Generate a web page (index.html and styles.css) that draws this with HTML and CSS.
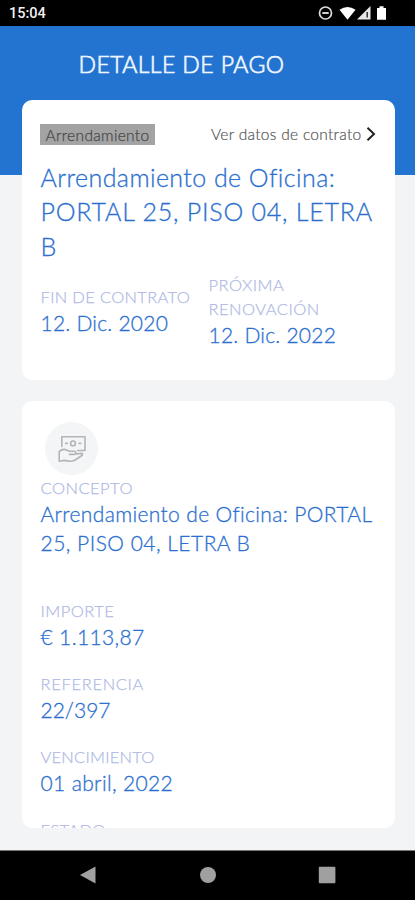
FILE: index.html
```html
<!DOCTYPE html>
<html lang="es">
<head>
<meta charset="utf-8">
<title>Detalle de pago</title>
<link rel="stylesheet" href="styles.css">
</head>
<body>
<div class="phone">
  <div class="status">
    <span class="clock">15:04</span>
    <svg class="status-icons" width="72" height="18" viewBox="0 0 72 18">
      <circle cx="7.5" cy="8" r="6" fill="none" stroke="#ddd" stroke-width="1.7"/>
      <path d="M4.3 8h6.4" stroke="#ddd" stroke-width="1.9"/>
      <path d="M21.5 4.8Q29.5-1 37.5 4.8L29.5 14.8Z" fill="#fff"/>
      <path d="M52.5 1V14.5H39Z" fill="#e8e8e8"/>
      <path d="M49.2 7v5.5" stroke="#333" stroke-width="1.5"/>
      <path d="M59 3h2.5V1.2h4V3H68v11.7h-9Z" fill="#fff"/>
    </svg>
  </div>
  <header class="header"><h1>DETALLE DE PAGO</h1></header>
  <main class="content">
    <section class="card contract">
      <div class="top-row">
        <span class="badge">Arrendamiento</span>
        <a class="link">Ver datos de contrato<svg width="10" height="16" viewBox="0 0 10 16"><path d="M1.5 1.8L8 8L1.5 14.2" fill="none" stroke="#222" stroke-width="2"/></svg></a>
      </div>
      <h2><span class="h-a">Arrendamiento de Oficina:</span><br><span class="h-b">PORTAL 25, PISO 04, LETRA</span><br>B</h2>
      <div class="dates">
        <div><div class="label">FIN DE CONTRATO</div><div class="value t2">12. Dic. 2020</div></div>
        <div><div class="label t5">PRÓXIMA<br>RENOVACIÓN</div><div class="value t2">12. Dic. 2022</div></div>
      </div>
    </section>
    <section class="card payment">
      <div class="avatar">
        <svg width="30" height="30" viewBox="0 0 30 30" fill="none" stroke="#b3b5b7" stroke-width="1.6" stroke-linejoin="round" stroke-linecap="round">
          <path d="M4.8 12.5V2.7H28V16.5H20.5"/>
          <circle cx="16" cy="9.4" r="2.4"/>
          <path d="M8.6 9.4h1.6M22.2 9.4h1.6"/>
          <path d="M2.2 17.6C5 14.9 9 15.2 12 17.2H17C19.4 17.2 19.6 20.4 17 20.4H12.5M19 20L24.4 19.4C26 19.6 25.8 21.2 24.6 21.8L17.6 26.2C15.4 27.6 9.8 27 7.2 26.4L2.2 27.2V17.6"/>
        </svg>
      </div>
      <div class="field concept"><div class="label t5">CONCEPTO</div><div class="value"><span>Arrendamiento de Oficina: PORTAL</span><br><span class="t5">25, PISO 04, LETRA B</span></div></div>
      <div class="field"><div class="label t5">IMPORTE</div><div class="value">€ 1.113,87</div></div>
      <div class="field"><div class="label t7">REFERENCIA</div><div class="value t0">22/397</div></div>
      <div class="field"><div class="label t2">VENCIMIENTO</div><div class="value">01 abril, 2022</div></div>
      <div class="field"><div class="label">ESTADO</div></div>
    </section>
  </main>
  <nav class="navbar">
    <svg width="20" height="20" viewBox="0 0 20 20"><path d="M2 10L17.5 1.5V18.5Z"/></svg>
    <svg width="20" height="20" viewBox="0 0 20 20"><circle cx="10" cy="10" r="8"/></svg>
    <svg width="20" height="20" viewBox="0 0 20 20"><rect x="1.8" y="1.8" width="16.6" height="16.4" rx="1"/></svg>
  </nav>
</div>
</body>
</html>
```
FILE: styles.css
```css
* { box-sizing: border-box; }
body { margin: 0; font-family: Lato, "Open Sans", sans-serif; font-weight: 300; }
h1, h2 { margin: 0; font-weight: 300; }
svg { display: block; }
.phone { width: 415px; height: 900px; display: flex; flex-direction: column; overflow: hidden; background: #f3f4f6; }
.status { height: 25.5px; flex: none; background: #000; display: flex; justify-content: space-between; padding: 5px 23px 0 9px; }
.clock { font: 500 14.5px/18px Roboto, sans-serif; color: #f2f2f2; }
.status-icons { margin-right: 2px; }
.header { height: 149px; flex: none; background: #2374d1; padding: 23px 0 0 78.5px; }
.header h1 { font-size: 23px; line-height: 30px; letter-spacing: .42px; color: #eff5ff; -webkit-text-stroke: .7px #eff5ff; }
.content { flex: 1; min-height: 0; margin-top: -75px; padding: 0 20.5px 21.5px 21.5px; display: flex; flex-direction: column; gap: 21.5px; }
.card { background: #fff; border-radius: 10px; padding-left: 19px; padding-right: 18px; overflow: hidden; }
.contract { height: 280.2px; flex: none; padding-top: 24px; }
.payment { flex: 1; min-height: 0; padding-top: 21px; }
.top-row { display: flex; justify-content: space-between; align-items: center; height: 21.5px; }
.badge { width: 115px; height: 21.5px; margin-left: -.5px; padding-left: 5.5px; background: #a3a3a3; color: #484848; font-size: 15.5px; line-height: 22px; letter-spacing: .33px; -webkit-text-stroke: .25px #484848; }
.link { display: flex; align-items: center; gap: 4px; color: #555; font-size: 15.5px; line-height: 22px; letter-spacing: .3px; margin-right: 1px; -webkit-text-stroke: .2px #555; white-space: nowrap; }
h2 { margin-top: 14.8px; color: #2c70cf; font-size: 25px; line-height: 34.5px; white-space: nowrap; -webkit-text-stroke: .3px #2c70cf; }
.h-a { letter-spacing: .42px; }
.h-b { letter-spacing: .77px; }
.dates { display: grid; grid-template-columns: 168px 1fr; align-items: center; margin-top: 11.1px; }
.label { color: #b0bae5; font-size: 16.5px; line-height: 23.3px; letter-spacing: .32px; -webkit-text-stroke: .25px #b0bae5; }
.value { color: #2c70cf; font-size: 21px; line-height: 28.8px; letter-spacing: .36px; white-space: nowrap; -webkit-text-stroke: .3px #2c70cf; }
.t0 { letter-spacing: 0; }
.t2 { letter-spacing: .23px; }
.t5 { letter-spacing: .48px; }
.t7 { letter-spacing: .68px; }
.avatar { width: 53px; height: 53px; margin-left: 4.5px; border-radius: 50%; background: #f3f5f6; display: grid; place-items: center; }
.field { margin-bottom: 20.9px; }
.concept { margin-top: 1.6px; margin-bottom: 42.4px; }
.navbar { height: 50.5px; flex: none; background: #000; border-top: 1px solid #777; display: flex; justify-content: space-between; align-items: center; padding: 0 78px; fill: #a0a0a0; }
```
